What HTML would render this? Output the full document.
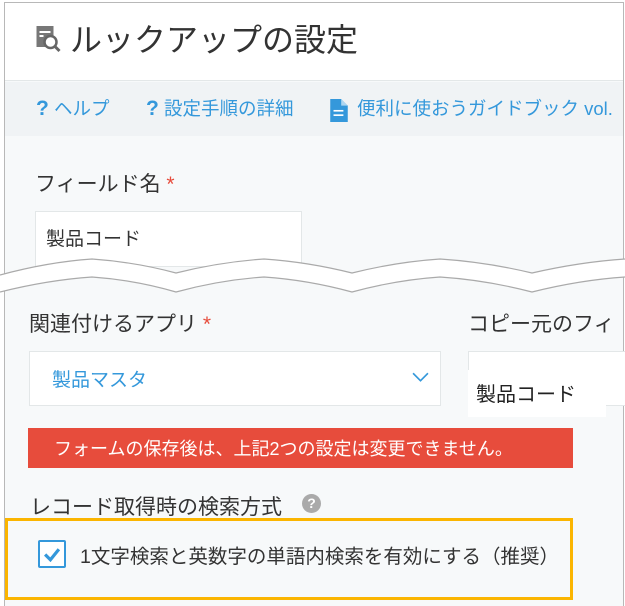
<!DOCTYPE html>
<html><head><meta charset="utf-8"><style>
*{margin:0;padding:0;box-sizing:border-box}
body{width:625px;height:606px;background:#fff;position:relative;overflow:hidden;font-family:"Liberation Sans","Noto Sans CJK JP",sans-serif;color:#333}
.a{position:absolute;white-space:nowrap}
</style></head><body>
<div class="a" style="left:4px;top:2px;width:620px;height:604px;border:1px solid #b8b8b8;border-bottom:none;background:#f7f9fa"></div>
<div class="a" style="left:5px;top:3px;width:618px;height:78px;background:#fff;border-bottom:1px solid #e3e7e8"></div>
<div class="a" style="left:5px;top:82px;width:618px;height:54px;background:#f0f3f5"></div>
<svg class="a" style="left:34px;top:25px" width="28" height="28" viewBox="0 0 25 28"><rect x="1" y="1" width="17" height="21" fill="#777"/><rect x="4" y="6" width="11" height="2" fill="#fff"/><rect x="4" y="10" width="4" height="2" fill="#fff"/><circle cx="15" cy="17" r="6" fill="#fff" stroke="#666" stroke-width="2.5"/><line x1="19" y1="21" x2="24" y2="26" stroke="#666" stroke-width="3"/></svg>
<div class="a" style="left:70px;top:15px;font-size:32px;color:#333">ルックアップの設定</div>
<div class="a" style="left:36px;top:95px;font-size:18.5px;color:#3498db"><b style="font-size:21px">?</b> ヘルプ</div>
<div class="a" style="left:146px;top:95px;font-size:18.5px;color:#3498db"><b style="font-size:21px">?</b> 設定手順の詳細</div>
<svg class="a" style="left:330px;top:99px" width="18" height="23" viewBox="0 0 16 21"><path d="M0 0H10L16 6V21H0Z" fill="#3498db"/><path d="M10 0V6H16" fill="#fff" opacity=".6"/><rect x="3" y="10" width="9" height="1.5" fill="#fff"/><rect x="3" y="14" width="9" height="1.5" fill="#fff"/></svg>
<div class="a" style="left:357px;top:95px;font-size:18.5px;color:#3498db">便利に使おうガイドブック vol.</div>
<div class="a" style="left:35px;top:168px;font-size:21px">フィールド名 <span style="color:#e74c3c">*</span></div>
<div class="a" style="left:35px;top:211px;width:267px;height:56px;background:#fff;border:1px solid #e3e7e8"></div>
<div class="a" style="left:46px;top:224px;font-size:19px">製品コード</div>
<svg class="a" style="left:0;top:252px" width="625" height="45" viewBox="0 252 625 45">
<path d="M0 275 Q48 262 92 259 Q135 262 176 273 Q220 262 264 259 Q308 262 352 273 Q396 262 440 259 Q486 262 532 273 Q580 262 625 259 L625 277 Q580 280 532 292 Q486 280 440 277 Q396 280 352 292 Q308 280 264 277 Q220 280 176 292 Q135 280 92 277 Q48 280 0 292Z" fill="#fff"/>
<path d="M0 275 Q48 262 92 259 Q135 262 176 273 Q220 262 264 259 Q308 262 352 273 Q396 262 440 259 Q486 262 532 273 Q580 262 625 259" fill="none" stroke="#aaa" stroke-width="1.2"/>
<path d="M0 292 Q48 280 92 277 Q135 280 176 292 Q220 280 264 277 Q308 280 352 292 Q396 280 440 277 Q486 280 532 292 Q580 280 625 277" fill="none" stroke="#aaa" stroke-width="1.2"/>
</svg>
<div class="a" style="left:29px;top:308px;font-size:21px">関連付けるアプリ <span style="color:#e74c3c">*</span></div>
<div class="a" style="left:468px;top:308px;font-size:21px">コピー元のフィ</div>
<div class="a" style="left:29px;top:351px;width:412px;height:55px;background:#fff;border:1px solid #e3e7e8"></div>
<div class="a" style="left:52px;top:365px;font-size:19px;color:#3498db">製品マスタ</div>
<svg class="a" style="left:412px;top:372px" width="17" height="11" viewBox="0 0 16 10"><path d="M1 1L8 8L15 1" fill="none" stroke="#3498db" stroke-width="1.5"/></svg>
<div class="a" style="left:468px;top:351px;width:160px;height:55px;background:#fff;border:1px solid #e3e7e8"></div>
<div class="a" style="left:468px;top:370px;width:138px;height:47px;background:#fff"></div>
<div class="a" style="left:476px;top:378px;font-size:20px;color:#222">製品コード</div>
<div class="a" style="left:28px;top:428px;width:545px;height:40px;background:#e74c3c"></div>
<div class="a" style="left:54px;top:435px;font-size:18px;color:#fff">フォームの保存後は、上記2つの設定は変更できません。</div>
<div class="a" style="left:30px;top:491px;font-size:21px">レコード取得時の検索方式</div>
<div class="a" style="left:302px;top:494px;width:19px;height:19px;border-radius:50%;background:#aaa;color:#fff;font-size:14px;font-weight:bold;text-align:center;line-height:19px">?</div>
<div class="a" style="left:5px;top:518px;width:568px;height:82px;border:3px solid #fbb500"></div>
<div class="a" style="left:38px;top:540px;width:28px;height:28px;border:2px solid #3498db;border-radius:2px;background:#fff"></div>
<svg class="a" style="left:43px;top:547px" width="18" height="15" viewBox="0 0 17 14"><path d="M2 7L7 12L15 2" fill="none" stroke="#3498db" stroke-width="3"/></svg>
<div class="a" style="left:80px;top:540px;font-size:19.5px">1文字検索と英数字の単語内検索を有効にする（推奨）</div>
</body></html>
